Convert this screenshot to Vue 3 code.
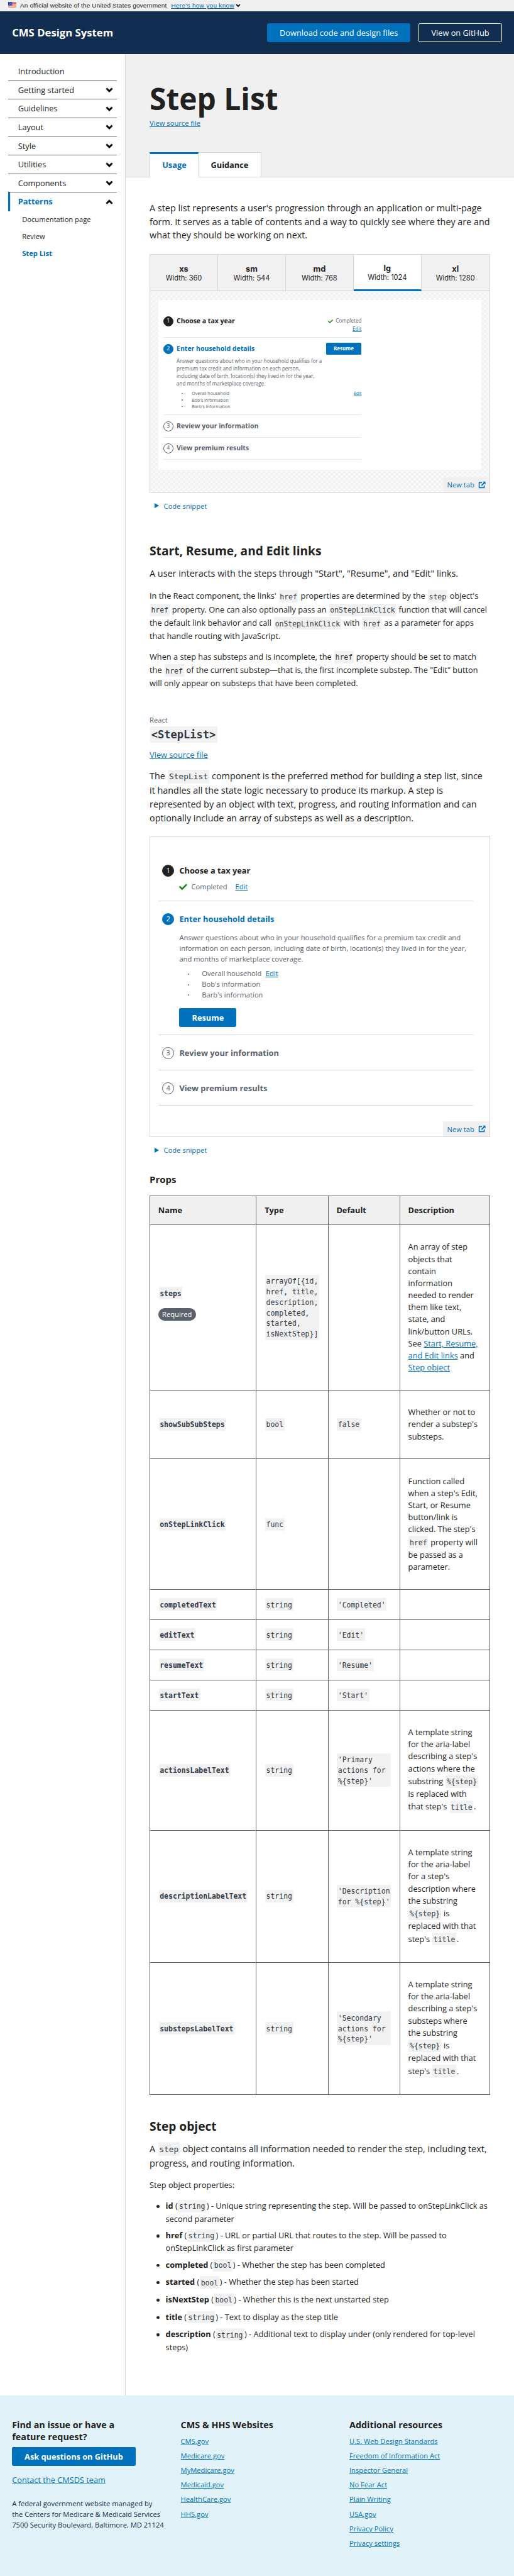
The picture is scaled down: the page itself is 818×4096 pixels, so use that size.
<script setup>
const nav = ['Getting started', 'Guidelines', 'Layout', 'Style', 'Utilities', 'Components']

const sizes = [
  { name: 'xs', width: 360 },
  { name: 'sm', width: 544 },
  { name: 'md', width: 768 },
  { name: 'lg', width: 1024, active: true },
  { name: 'xl', width: 1280 },
]

const substeps = ['Overall household', "Bob's information", "Barb's information"]

const stringProps = [
  { name: 'completedText', value: "'Completed'" },
  { name: 'editText', value: "'Edit'" },
  { name: 'resumeText', value: "'Resume'" },
  { name: 'startText', value: "'Start'" },
]

const stepFields = [
  { name: 'id', type: 'string', text: 'Unique string representing the step. Will be passed to onStepLinkClick as second parameter' },
  { name: 'href', type: 'string', text: 'URL or partial URL that routes to the step. Will be passed to onStepLinkClick as first parameter' },
  { name: 'completed', type: 'bool', text: 'Whether the step has been completed' },
  { name: 'started', type: 'bool', text: 'Whether the step has been started' },
  { name: 'isNextStep', type: 'bool', text: 'Whether this is the next unstarted step' },
  { name: 'title', type: 'string', text: 'Text to display as the step title' },
  { name: 'description', type: 'string', text: 'Additional text to display under (only rendered for top-level steps)' },
]

const cmsSites = ['CMS.gov', 'Medicare.gov', 'MyMedicare.gov', 'Medicaid.gov', 'HealthCare.gov', 'HHS.gov']
const resources = [
  'U.S. Web Design Standards',
  'Freedom of Information Act',
  'Inspector General',
  'No Fear Act',
  'Plain Writing',
  'USA.gov',
  'Privacy Policy',
  'Privacy settings',
]
const checkPath =
  'M173.898 439.404l-166.4-166.4c-9.997-9.997-9.997-26.206 0-36.204l36.203-36.204c9.997-9.998 26.207-9.998 36.204 0L192 312.69 432.095 72.596c9.997-9.997 26.207-9.997 36.204 0l36.203 36.204c9.997 9.997 9.997 26.206 0 36.204l-294.4 294.401c-9.998 9.997-26.207 9.997-36.204-.001z'
</script>

<template>
  <div class="page">
    <div class="banner">
      <svg class="flag" viewBox="0 0 16 11">
        <rect width="16" height="11" fill="#fff" />
        <path d="M0 .6h16M0 2.8h16M0 5h16M0 7.6h16M0 10.2h16" stroke="#db3e1f" stroke-width="1.2" />
        <rect width="8" height="7" fill="#1e33b1" />
        <path d="M1 1.5h6.4M1.6 3.5h6M1 5.5h6.4" stroke="#fff" stroke-width=".8" stroke-dasharray=".9 1" />
      </svg>
      <span class="banner-text">An official website of the United States government</span>
      <a class="banner-link">Here's how you know</a>
      <svg class="banner-chev" viewBox="0 0 14 10"><path d="M1.8 2 7 7.2 12.2 2" fill="none" stroke="#000" stroke-width="3.4" /></svg>
    </div>

    <header class="header">
      <span class="brand">CMS Design System</span>
      <a class="hbtn solid">Download code and design files</a>
      <a class="hbtn outline">View on GitHub</a>
    </header>

    <div class="body">
      <nav class="sidebar">
        <div class="nav-item">Introduction</div>
        <div v-for="n in nav" :key="n" class="nav-item">
          {{ n }}
          <svg viewBox="0 0 14 10"><path d="M1.6 1.8 7 7.2 12.4 1.8" fill="none" stroke="#000" stroke-width="3.4" /></svg>
        </div>
        <div class="nav-item current">
          Patterns
          <svg viewBox="0 0 14 10"><path d="M1.6 8.2 7 2.8 12.4 8.2" fill="none" stroke="#000" stroke-width="3.4" /></svg>
        </div>
        <div class="nav-sub">Documentation page</div>
        <div class="nav-sub">Review</div>
        <div class="nav-sub on">Step List</div>
      </nav>

      <main class="main">
        <div class="hero">
          <h1>Step List</h1>
          <a class="source-sm">View source file</a>
          <div class="tabs">
            <span class="tab selected">Usage</span>
            <span class="tab">Guidance</span>
          </div>
        </div>

        <div class="content">
          <p class="lead intro">A step list represents a user's progression through an application or multi-page form. It serves as a table of contents and a way to quickly see where they are and what they should be working on next.</p>

          <div class="example responsive">
            <div class="sizes">
              <div v-for="s in sizes" :key="s.name" class="size" :class="{ active: s.active }">
                <b>{{ s.name }}</b>
                <span>Width: {{ s.width }}</span>
              </div>
            </div>
            <div class="frame">
              <div class="wide-step w1">
                <span class="num done">1</span>
                <h4 class="ink">Choose a tax year</h4>
                <div class="actions">
                  <div class="completed"><svg viewBox="0 0 512 512"><path :d="checkPath" fill="#12890e" /></svg>Completed</div>
                  <a>Edit</a>
                </div>
              </div>
              <div class="wide-step w2">
                <span class="num active">2</span>
                <div class="wide-body">
                  <h4 class="blue">Enter household details</h4>
                  <p>Answer questions about who in your household qualifies for a premium tax credit and information on each person, including date of birth, location(s) they lived in for the year, and months of marketplace coverage.</p>
                  <ul>
                    <li v-for="(s, i) in substeps" :key="s"><span>{{ s }}</span><a v-if="i === 0">Edit</a></li>
                  </ul>
                </div>
                <span class="resume">Resume</span>
              </div>
              <div class="wide-step w3">
                <span class="num">3</span>
                <h4>Review your information</h4>
              </div>
              <div class="wide-step w4">
                <span class="num">4</span>
                <h4>View premium results</h4>
              </div>
            </div>
            <a class="newtab">New tab
              <svg viewBox="0 0 15 15"><path d="M7.5 3H2v10h10V8.5" fill="none" stroke="#0071bc" stroke-width="2" /><path d="M9 1h5.5v5.5l-1.9-1.9-5.2 5.2-1.7-1.7 5.2-5.2z" fill="#0071bc" /></svg>
            </a>
          </div>
          <a class="snippet"><i></i>Code snippet</a>

          <h2 class="h-start">Start, Resume, and Edit links</h2>
          <p class="lead l-start">A user interacts with the steps through "Start", "Resume", and "Edit" links.</p>
          <p class="para">In the React component, the links' <code>href</code> properties are determined by the <code>step</code> object's <code>href</code> property. One can also optionally pass an <code>onStepLinkClick</code> function that will cancel the default link behavior and call <code>onStepLinkClick</code> with <code>href</code> as a parameter for apps that handle routing with JavaScript.</p>
          <p class="para">When a step has substeps and is incomplete, the <code>href</code> property should be set to match the <code>href</code> of the current substep—that is, the first incomplete substep. The "Edit" button will only appear on substeps that have been completed.</p>

          <div class="kind">React</div>
          <h3 class="comp">&lt;StepList&gt;</h3>
          <div class="source"><a>View source file</a></div>
          <p class="lead">The <code>StepList</code> component is the preferred method for building a step list, since it handles all the state logic necessary to produce its markup. A step is represented by an object with text, progress, and routing information and can optionally include an array of substeps as well as a description.</p>

          <div class="example plain">
            <div class="step s1">
              <span class="num done">1</span>
              <div>
                <h4 class="ink">Choose a tax year</h4>
                <div class="status"><svg viewBox="0 0 512 512"><path :d="checkPath" fill="#12890e" /></svg><span>Completed</span><a>Edit</a></div>
              </div>
            </div>
            <div class="step s2">
              <span class="num active">2</span>
              <div>
                <h4 class="blue">Enter household details</h4>
                <p>Answer questions about who in your household qualifies for a premium tax credit and information on each person, including date of birth, location(s) they lived in for the year, and months of marketplace coverage.</p>
                <ul>
                  <li v-for="(s, i) in substeps" :key="s"><span>{{ s }}</span><a v-if="i === 0">Edit</a></li>
                </ul>
                <span class="resume">Resume</span>
              </div>
            </div>
            <div class="step s3">
              <span class="num">3</span>
              <h4>Review your information</h4>
            </div>
            <div class="step s3">
              <span class="num">4</span>
              <h4>View premium results</h4>
            </div>
            <a class="newtab">New tab
              <svg viewBox="0 0 15 15"><path d="M7.5 3H2v10h10V8.5" fill="none" stroke="#0071bc" stroke-width="2" /><path d="M9 1h5.5v5.5l-1.9-1.9-5.2 5.2-1.7-1.7 5.2-5.2z" fill="#0071bc" /></svg>
            </a>
          </div>
          <a class="snippet"><i></i>Code snippet</a>

          <h3 class="props-title">Props</h3>
          <div class="table">
            <div class="tr head"><div>Name</div><div>Type</div><div>Default</div><div>Description</div></div>
            <div class="tr r-steps">
              <div class="required"><code>steps</code><span class="pill">Required</span></div>
              <div><code>arrayOf[{id, href, title, description, completed, started, isNextStep}]</code></div>
              <div></div>
              <div><p>An array of step objects that contain information needed to render them like text, state, and link/button URLs. See <a>Start, Resume, and Edit links</a> and <a>Step object</a></p></div>
            </div>
            <div class="tr r-show">
              <div><code>showSubSubSteps</code></div><div><code>bool</code></div><div><code>false</code></div>
              <div><p>Whether or not to render a substep's substeps.</p></div>
            </div>
            <div class="tr r-click">
              <div><code>onStepLinkClick</code></div><div><code>func</code></div><div></div>
              <div><p>Function called when a step's Edit, Start, or Resume button/link is clicked. The step's <code>href</code> property will be passed as a parameter.</p></div>
            </div>
            <div v-for="p in stringProps" :key="p.name" class="tr r-short">
              <div><code>{{ p.name }}</code></div><div><code>string</code></div><div><code>{{ p.value }}</code></div><div></div>
            </div>
            <div class="tr r-actions">
              <div><code>actionsLabelText</code></div><div><code>string</code></div><div><code>'Primary actions for %{step}'</code></div>
              <div><p>A template string for the aria-label describing a step's actions where the substring <code>%{step}</code> is replaced with that step's <code>title</code>.</p></div>
            </div>
            <div class="tr r-long">
              <div><code>descriptionLabelText</code></div><div><code>string</code></div><div><code>'Description for %{step}'</code></div>
              <div><p>A template string for the aria-label for a step's description where the substring <code>%{step}</code> is replaced with that step's <code>title</code>.</p></div>
            </div>
            <div class="tr r-long">
              <div><code>substepsLabelText</code></div><div><code>string</code></div><div><code>'Secondary actions for %{step}'</code></div>
              <div><p>A template string for the aria-label describing a step's substeps where the substring <code>%{step}</code> is replaced with that step's <code>title</code>.</p></div>
            </div>
          </div>

          <h2 class="h-object">Step object</h2>
          <p class="lead l-object">A <code>step</code> object contains all information needed to render the step, including text, progress, and routing information.</p>
          <p class="props-intro">Step object properties:</p>
          <ul class="fields">
            <li v-for="f in stepFields" :key="f.name"><b>{{ f.name }}</b> (<code>{{ f.type }}</code>) - {{ f.text }}</li>
          </ul>
        </div>
      </main>
    </div>

    <footer class="footer">
      <div class="fcol">
        <h5>Find an issue or have a<br />feature request?</h5>
        <span class="ask">Ask questions on GitHub</span>
        <a class="contact">Contact the CMSDS team</a>
        <p>A federal government website managed by<br />the Centers for Medicare &amp; Medicaid Services<br />7500 Security Boulevard, Baltimore, MD 21124</p>
      </div>
      <div class="fcol links">
        <h5>CMS &amp; HHS Websites</h5>
        <a v-for="l in cmsSites" :key="l">{{ l }}</a>
      </div>
      <div class="fcol links">
        <h5>Additional resources</h5>
        <a v-for="l in resources" :key="l">{{ l }}</a>
      </div>
    </footer>
  </div>
</template>

<style>
html, body { margin: 0; background: #fff; overflow: hidden; }
</style>

<style scoped>
.page, .page * { box-sizing: border-box; }
.page {
  width: 1024px;
  height: 5128px;
  zoom: 0.79883;
  overflow: hidden;
  font: 16px/24px "Open Sans", sans-serif;
  color: #212121;
  background: #fff;
}
h1, h2, h3, h4, h5, p, ul { margin: 0; padding: 0; }
ul { list-style: none; }
a { color: #0071bc; text-decoration: underline; }
svg { display: block; flex: none; }

.banner { height: 22px; display: flex; align-items: center; padding-left: 16px; background: #f0f0f0; font: 12.5px/22px "Liberation Sans", Arial, sans-serif; white-space: nowrap; }
.flag { width: 16px; height: 11px; margin-top: -3px; }
.banner-text { width: 301px; margin-left: 8px; letter-spacing: 0.2px; }
.banner-link { letter-spacing: 0.4px; width: 127px; color: #0063b0; }
.banner-chev { width: 10px; height: 7px; margin-left: 1px; }

.header { height: 86px; background: #112e51; display: flex; align-items: center; padding: 0 24px; color: #fff; }
.brand { font-size: 20.95px; font-weight: 700; flex: 1; }
.hbtn { height: 38px; line-height: 36px; border-radius: 3px; color: #fff; text-decoration: none; text-align: center; border: 1px solid #0071bc; white-space: nowrap; }
.solid { width: 286px; background: #0071bc; margin-right: 16px; }
.outline { width: 166px; border-color: #fff; }

.body { display: flex; height: 4660px; }
.sidebar { width: 250px; border-right: 1px solid #d6d7d9; padding: 16px 16px 0; }
.nav-item { height: 37.05px; display: flex; justify-content: space-between; align-items: center; padding: 1px 7px 0 20px; border-bottom: 1px solid #5b616b; }
.nav-item svg { width: 15px; height: 10.5px; }
.current { border-bottom: 0; padding-top: 0; box-shadow: inset 4px 0 #0071bc; color: #0071bc; font-weight: 700; }
.nav-sub { font-size: 14px; line-height: 34px; height: 34px; padding-left: 28px; }
.current + .nav-sub { margin-top: -1.4px; }
.on { color: #0071bc; font-weight: 700; }

.main { width: 774px; }
.hero { height: 245px; background: #f0f0f0; border-bottom: 1px solid #d6d7d9; padding: 51.9px 48px 0; display: flex; flex-direction: column; align-items: flex-start; }
h1 { font-size: 60px; line-height: 72px; margin-bottom: 3.8px; }
.source-sm { font-size: 14px; line-height: 21px; }
.tabs { display: flex; margin-top: auto; margin-bottom: -1px; }
.tab { height: 50px; line-height: 49px; padding: 0 24px; background: #fff; font-weight: 700; border: 1px solid #d6d7d9; border-left-width: 0; }
.selected { width: 98px; color: #0071bc; line-height: 45px; border-left-width: 1px; border-top: 4px solid #0071bc; border-bottom-color: #fff; }

.content { padding: 47.7px 48px 0; }
.lead { font-size: 18px; line-height: 27px; }
code { display: inline-block; font: 0.897em/1.46 "DejaVu Sans Mono", monospace; color: #323a45; background: #f1f1f1; padding: 3px 2px 1px; margin: 1px; }

.example { position: relative; border: 1px solid #d6d7d9; }
.responsive {
  margin-top: 24.3px;
  height: 475px;
  background: repeating-conic-gradient(#f1f1f1 0 25%, #f9f9f9 0 50%) 0 0 / 10px 10px;
}
.sizes { display: grid; grid-template-columns: repeat(5, 1fr); height: 73px; border-bottom: 1px solid #d6d7d9; }
.size { background: #f1f1f1; border-right: 1px solid #d6d7d9; display: flex; flex-direction: column; align-items: center; justify-content: center; font: 13.85px/18px Inter, sans-serif; padding-top: 4px; }
.size:last-child { border-right: 0; }
.size b { font-size: 16px; line-height: 18px; }
.size.active { background: #fff; border-bottom: 4px solid #0071bc; margin-bottom: -1px; }

.frame { width: 644px; height: 337.5px; margin: 17px 0 0 16px; background: #fff; padding-left: 10px; }
.num { flex: none; border-radius: 50%; text-align: center; color: #5b616b; border: 1px solid #5b616b; }
.num.done { background: #212121; border-color: #212121; color: #fff; }
.num.active { background: #0071bc; border-color: #0071bc; color: #fff; }
h4 { color: #5b616b; font-weight: 700; }
h4.ink { color: #212121; }
h4.blue { color: #0071bc; }
.resume { display: block; background: #0071bc; color: #fff; font-weight: 700; text-align: center; border-radius: 3px; }

.wide-step { display: flex; width: 395px; border-bottom: 1px solid #e4e5e6; }
.wide-step .num { width: 20px; height: 20px; font-size: 11px; line-height: 17px; margin-right: 6.6px; }
.wide-step h4 { font-size: 13.15px; line-height: 20px; }
.w1 { height: 75.5px; padding-top: 32px; }
.w2 { height: 154px; padding-top: 12px; position: relative; }
.w3 { height: 44.3px; padding-top: 12.5px; }
.w4 { height: 43.7px; padding-top: 12px; }
.actions { margin-left: auto; text-align: right; font-size: 10.06px; line-height: 16px; padding-top: 2px; color: #5b616b; }
.completed { display: flex; align-items: center; }
.completed svg { width: 10px; height: 10px; margin-right: 5.5px; }
.wide-body { flex: 1; color: #5b616b; }
.wide-body p { width: 290px; font-size: 10.06px; line-height: 15px; margin-top: 7px; }
.wide-body ul { font-size: 8.8px; line-height: 13.1px; margin-top: 5px; }
li { position: relative; }
.wide-body li { display: flex; justify-content: space-between; padding-left: 30.4px; }
.wide-body li::before { content: ""; position: absolute; left: 10.5px; top: 5.5px; width: 2px; height: 2px; border-radius: 1px; background: #5b616b; }
.w2 .resume { position: absolute; right: 0; top: 10px; width: 71px; height: 23.5px; font-size: 10.06px; line-height: 23.5px; border-radius: 2px; }
.newtab { position: absolute; right: 0; bottom: 0; width: 92px; height: 30px; display: flex; align-items: center; justify-content: space-between; padding: 1px 7px 0 8px; background: #f0f0f0; font-size: 14px; line-height: 29px; text-decoration: none; }
.newtab svg { width: 15px; height: 15px; }
.snippet { display: flex; align-items: center; margin-top: 16.3px; padding-left: 10.5px; font-size: 14px; line-height: 21px; height: 21px; text-decoration: none; }
.snippet i { border: 6px solid transparent; border-left: 10px solid #0071bc; border-right: 0; margin-right: 9px; margin-top: -2px; }

h2 { font-size: 24px; line-height: 31px; }
.h-start { margin-top: 63.8px; }
.l-start { margin: 15.4px 0 18.1px; }
.para { margin-bottom: 16px; }
.kind { font-size: 14px; line-height: 21px; color: #5b616b; margin-top: 50.8px; }
.comp { display: block; width: 134px; height: 32px; margin: 2.2px 0 0 1px; background: #f1f1f1; color: #323a45; font: 700 21.3px/34px "DejaVu Sans Mono", monospace; padding-left: 2.5px; }
.source { margin: 12.5px 0 16.2px; }

.plain { margin-top: 24px; height: 598px; padding: 39px 32px 0 16px; }
.step { display: flex; border-bottom: 1px solid #d6d7d9; padding-left: 8px; color: #5b616b; font-size: 14px; line-height: 21px; }
.step .num { width: 24px; height: 24px; border-width: 2px; line-height: 20px; margin-right: 10px; }
.step h4 { font-size: 16px; line-height: 24px; }
.s1 { height: 88.5px; padding-top: 16px; }
.s2 { height: 266.3px; padding-top: 23.5px; }
.s3 { height: 70px; padding-top: 23.5px; }
.status { display: flex; align-items: center; margin-top: 9.5px; }
.status svg { width: 16px; height: 16px; margin-right: 8px; }
.status a { margin-left: 16px; }
.step p { margin-top: 15.5px; }
.step ul { margin-top: 8px; }
.step li { padding-left: 45px; }
.step li::before { content: ""; position: absolute; left: 17px; top: 9.5px; width: 2.6px; height: 2.6px; border-radius: 50%; background: #5b616b; }
.step li a { margin-left: 8px; }
.step .resume { width: 114px; height: 38px; font-size: 16px; line-height: 38px; margin-top: 15px; }

.props-title { font-size: 18.72px; line-height: 24px; margin-top: 34.7px; }
.table { margin-top: 21px; width: 678px; border-top: 1px solid #5b616b; border-left: 1px solid #5b616b; }
.tr { display: grid; grid-template-columns: 212px 143px 143px 179px; border-bottom: 1px solid #5b616b; }
.tr > div { border-right: 1px solid #5b616b; padding: 0 16px; display: flex; flex-direction: column; align-items: flex-start; justify-content: center; }
.tr > div:first-child code { font-weight: 700; }
.tr > .required { padding-bottom: 15px; }
.head { height: 57px; background: #f0f0f0; font-weight: 700; }
.r-steps { height: 329px; }
.r-show { height: 137px; }
.r-click { height: 260px; }
.r-short { height: 60px; }
.r-actions { height: 239px; }
.r-long { height: 263px; }
.pill { height: 26px; line-height: 26px; width: 75px; text-align: center; border-radius: 13px; background: #5b616b; color: #fff; font-size: 14px; margin-top: 16px; }

.h-object { margin-top: 47.5px; }
.l-object { margin-top: 15.4px; }
.props-intro { margin: 18px 0 16px; }
.fields li { padding-left: 32px; margin-bottom: 7.7px; }
.fields li::before { content: ""; position: absolute; left: 14px; top: 11px; width: 6px; height: 6px; border-radius: 50%; background: #212121; }

.footer { height: 360px; background: #e1f3f8; padding: 48px 24px 0; display: grid; grid-template-columns: 336px 336px 1fr; }
h5 { font-size: 18px; line-height: 23.2px; }
.ask { display: block; width: 246px; height: 38px; line-height: 38px; margin-top: 8.7px; border-radius: 3px; background: #0071bc; color: #fff; font-weight: 700; text-align: center; }
.contact { display: block; margin-top: 16.2px; }
.fcol p { font-size: 14px; line-height: 21px; color: #112e51; margin-top: 24.6px; white-space: nowrap; }
.links a { display: block; font-size: 14px; line-height: 21px; margin-bottom: 8px; }
.links h5 { margin-bottom: 10.1px; }
</style>
